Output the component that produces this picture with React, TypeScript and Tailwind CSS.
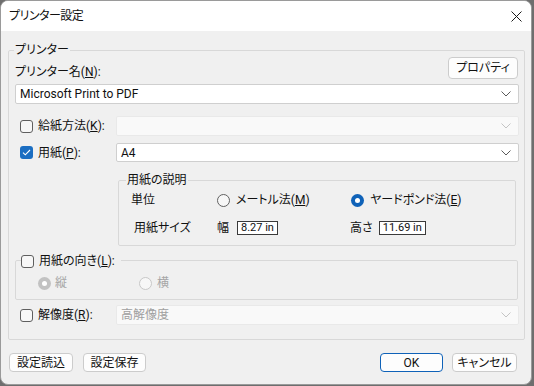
import React from "react";

const Chevron = ({ light }: { light?: boolean }) => (
  <svg width="10" height="6" viewBox="0 0 10 6" className="shrink-0">
    <path d="M0.5 0.5 L5 5 L9.5 0.5" fill="none" stroke={light ? "#c4c4c4" : "#5a5a5a"} strokeWidth="1" />
  </svg>
);

const Check = ({ checked }: { checked?: boolean }) =>
  checked ? (
    <div className="w-[13px] h-[13px] rounded-[3px] bg-[#1b6ec2] flex items-center justify-center shrink-0">
      <svg width="9" height="7" viewBox="0 0 9 7">
        <path d="M1 3.6 L3.3 5.8 L8 1" fill="none" stroke="#ffffff" strokeWidth="1.1" />
      </svg>
    </div>
  ) : (
    <div className="w-[13px] h-[13px] rounded-[3px] border border-[#5f5f5f] bg-[#f7f7f7] shrink-0" />
  );

const Radio = ({ checked, disabled }: { checked?: boolean; disabled?: boolean }) => {
  if (checked)
    return (
      <div
        className={
          "w-[13px] h-[13px] rounded-full flex items-center justify-center shrink-0 " +
          (disabled ? "bg-[#c2c2c2]" : "bg-[#0f62b8]")
        }
      >
        <div className="w-[5px] h-[5px] rounded-full bg-white" />
      </div>
    );
  return (
    <div
      className={
        "w-[13px] h-[13px] rounded-full border shrink-0 bg-[#f7f7f7] " +
        (disabled ? "border-[#c8c8c8]" : "border-[#616161]")
      }
    />
  );
};

const Combo = ({
  text,
  disabled,
  w,
  h,
}: {
  text: string;
  disabled?: boolean;
  w: string;
  h: string;
}) => (
  <div
    className={
      "flex items-center justify-between pl-[4px] pr-[7px] rounded-[2px] border " +
      w +
      " " +
      h +
      " " +
      (disabled ? "bg-[#f9f9f9] border-[#e9e9e9] text-[#a0a0a0]" : "bg-white border-[#cfcfcf] text-[#111111]")
    }
  >
    <span className="leading-[16px]">{text}</span>
    <Chevron light={disabled} />
  </div>
);

const Btn = ({ children, w, primary }: { children: React.ReactNode; w: string; primary?: boolean }) => (
  <div
    className={
      "h-[19px] flex items-center justify-center rounded-[4px] bg-[#fdfdfd] " +
      w +
      " " +
      (primary ? "border border-[#0f62b8]" : "border border-[#cccccc]")
    }
  >
    <span className="leading-[16px]">{children}</span>
  </div>
);

export default function App() {
  return (
    <div className="w-[534px] h-[386px] bg-[#6e6e6e] text-[12px] font-normal text-[#111111] font-['Roboto','Noto_Sans_CJK_JP',sans-serif] [font-feature-settings:'palt'] overflow-hidden">
      <div className="w-[532px] h-[385px] bg-[#f0f0f0] rounded-[8px] border border-[#9a9a9a] overflow-hidden flex flex-col">
        {/* title bar */}
        <div className="h-[30px] bg-white flex items-center justify-between pl-[8px] pr-[8px] shrink-0">
          <span className="leading-[16px] text-[12px] tracking-[-0.5px]">プリンター設定</span>
          <svg width="11" height="11" viewBox="0 0 11 11" className="mr-[1px]">
            <path d="M0.5 0.5 L10.5 10.5 M10.5 0.5 L0.5 10.5" stroke="#1a1a1a" strokeWidth="1" />
          </svg>
        </div>

        {/* body */}
        <div className="flex-1 flex flex-col pl-[7px]">
          {/* printer group */}
          <div className="relative mt-[19px] w-[517px] h-[290px] border border-[#d8d8d8] rounded-[2px] flex flex-col">
            <span className="absolute -top-[9px] left-[5px] px-[1px] bg-[#f0f0f0] leading-[16px]">プリンター</span>

            <div className="flex justify-between pl-[6px] pr-[6px] mt-[6px]">
              <span className="self-start mt-[7px] leading-[16px]">
                プリンター名(<span className="underline">N</span>):
              </span>
              <Btn w="w-[70px] !h-[22px]">プロパティ</Btn>
            </div>

            <div className="ml-[6px] mt-[4px]">
              <Combo text="Microsoft Print to PDF" w="w-[504px]" h="h-[20px]" />
            </div>

            {/* 給紙方法 */}
            <div className="flex items-center mt-[12px] ml-[11px]">
              <div className="w-[96px] flex items-center gap-[5px]">
                <Check />
                <span className="leading-[16px]">
                  給紙方法(<span className="underline">K</span>):
                </span>
              </div>
              <Combo text="" disabled w="w-[403px]" h="h-[20px]" />
            </div>

            {/* 用紙 */}
            <div className="flex items-center mt-[7px] ml-[11px]">
              <div className="w-[96px] flex items-center gap-[5px]">
                <Check checked />
                <span className="leading-[16px]">
                  用紙(<span className="underline">P</span>):
                </span>
              </div>
              <Combo text="A4" w="w-[403px]" h="h-[19px]" />
            </div>

            {/* 用紙の説明 */}
            <div className="relative ml-[109px] mt-[18px] w-[398px] h-[66px] border border-[#d8d8d8] rounded-[2px]">
              <span className="absolute -top-[9px] left-[7px] px-[1px] bg-[#f0f0f0] leading-[16px]">用紙の説明</span>
              <div className="flex items-center mt-[11px] h-[16px]">
                <span className="w-[98px] pl-[12px] leading-[16px]">単位</span>
                <div className="w-[134px] flex items-center gap-[6px]">
                  <Radio />
                  <span className="leading-[16px]">
                    メートル法(<span className="underline">M</span>)
                  </span>
                </div>
                <div className="flex items-center gap-[6px]">
                  <Radio checked />
                  <span className="leading-[16px]">
                    ヤードポンド法(<span className="underline">E</span>)
                  </span>
                </div>
              </div>
              <div className="flex items-center mt-[12px] h-[16px]">
                <span className="w-[98px] pl-[15px] leading-[16px]">用紙サイズ</span>
                <div className="w-[133px] flex items-center gap-[8px]">
                  <span className="leading-[16px]">幅</span>
                  <div className="w-[41px] h-[14px] border border-[#3a3a3a] bg-white flex items-center pl-[3px] text-[11px] leading-[12px]">
                    8.27 in
                  </div>
                </div>
                <div className="flex items-center gap-[6px]">
                  <span className="leading-[16px]">高さ</span>
                  <div className="w-[47px] h-[14px] border border-[#3a3a3a] bg-white flex items-center pl-[3px] text-[11px] leading-[12px]">
                    11.69 in
                  </div>
                </div>
              </div>
            </div>

            {/* 用紙の向き */}
            <div className="relative ml-[6px] mt-[14px] w-[503px] h-[40px] border border-[#d8d8d8] rounded-[2px]">
              <div className="absolute -top-[8px] left-[5px] pr-[6px] bg-[#f0f0f0] flex items-center gap-[5px]">
                <Check />
                <span className="leading-[16px]">
                  用紙の向き(<span className="underline">L</span>):
                </span>
              </div>
              <div className="flex items-center mt-[14px] pl-[22px] h-[16px] text-[#a6a6a6]">
                <div className="w-[101px] flex items-center gap-[4px]">
                  <Radio checked disabled />
                  <span className="leading-[16px]">縦</span>
                </div>
                <div className="flex items-center gap-[5px]">
                  <Radio disabled />
                  <span className="leading-[16px]">横</span>
                </div>
              </div>
            </div>

            {/* 解像度 */}
            <div className="flex items-center mt-[5px] ml-[11px]">
              <div className="w-[96px] flex items-center gap-[5px]">
                <Check />
                <span className="leading-[16px]">
                  解像度(<span className="underline">R</span>):
                </span>
              </div>
              <Combo text="高解像度" disabled w="w-[403px]" h="h-[20px]" />
            </div>
          </div>

          {/* bottom buttons */}
          <div className="flex items-center mt-[13px] pl-[1px]">
            <Btn w="w-[64px]">設定読込</Btn>
            <div className="ml-[10px]">
              <Btn w="w-[63px]">設定保存</Btn>
            </div>
            <div className="ml-[234px]">
              <Btn w="w-[63px]" primary>
                OK
              </Btn>
            </div>
            <div className="ml-[9px]">
              <Btn w="w-[65px]">キャンセル</Btn>
            </div>
          </div>
        </div>
      </div>
    </div>
  );
}
